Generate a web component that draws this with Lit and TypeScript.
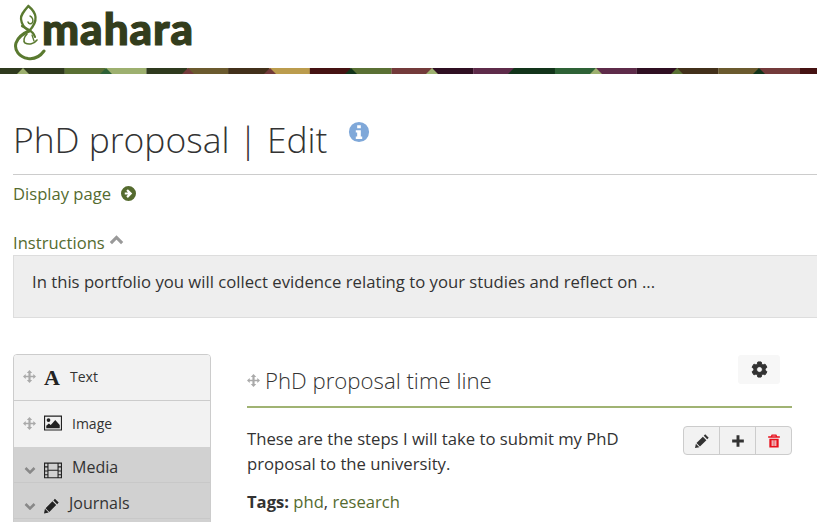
import { LitElement, html, css, svg } from 'lit';
import { customElement } from 'lit/decorators.js';

// banner pieces, left to right
const BANNER = [
  '#2f3a1e', '#2f3a1e', '#5a7034', '#9db06f', '#2f3a1e', '#6b5a2e', '#42301a', '#bb9c4d', '#451212',
  '#5a7034', '#733a3a', '#2f0f22', '#5e2b4a', '#12341a', '#2e6236', '#5e2b4a', '#2f0f22', '#42301a',
  '#6b5a2e', '#733a3a', '#451212',
];
// little triangles sitting on the bottom edge: [x, colour]
const TRIANGLES: [number, string][] = [
  [23, '#9db06f'], [106, '#2e6236'], [188, '#733a3a'], [270, '#733a3a'], [351, '#12341a'], [432, '#9db06f'],
  [514, '#12341a'], [596, '#9db06f'], [677, '#5a7034'], [759, '#12341a'],
];

const moveIcon = html`<svg class="move" viewBox="0 0 24 24"><path d="M12 0l5 5.500H14v5h5V7.500l5 4.500-5 4.500v-3h-5v5h3L12 24l-5-5.500h3v-5H5v3L0 12l5-4.500v3h5v-5H7z"/></svg>`;
const chevronDown = html`<svg class="chev" viewBox="0 0 24 16"><path d="M3 4l9 9 9-9" fill="none" stroke-width="5"/></svg>`;
const pencilPath = 'M17.500.5l6 6L21 9l-6-6zM13.500 4.500l6 6-11 11-6-6zM1.500 16.500l6 6L0 24z';

@customElement('app-root')
export class AppRoot extends LitElement {
  static styles = css`
    :host {
      display: block;
      height: 522px;
      overflow: hidden;
      background: #fff;
      color: #333;
      font-family: 'Open Sans', sans-serif;
      font-size: 16.6px;
    }

    .masthead {
      height: 68px;
      padding-left: 14px;
      display: flex;
      align-items: flex-start;
    }

    .mark {
      width: 36px;
      height: 58px;
      margin-top: 4px;
      flex: none;
    }

    .wordmark {
      font-family: Lato, sans-serif;
      font-weight: 900;
      font-size: 44px;
      letter-spacing: 1px;
      line-height: 56px;
      color: #333d1c;
      margin-left: -8px;
      -webkit-text-stroke: 1.2px #333d1c;
    }

    .banner {
      display: block;
      width: 817px;
      height: 6px;
    }

    main {
      padding-left: 13px;
    }

    .title {
      display: flex;
      align-items: flex-start;
      height: 101px;
      box-sizing: border-box;
      padding-top: 40px;
      border-bottom: 1px solid #ccc;
    }

    h1 {
      margin: 0;
      font-weight: 300;
      font-size: 35.4px;
      line-height: 50px;
    }

    .info {
      width: 22px;
      height: 22px;
      margin: 7px 0 0 21px;
      fill: #7fa8d9;
    }

    a {
      color: #556b2f;
      text-decoration: none;
    }

    .display {
      display: flex;
      align-items: center;
      gap: 10px;
      height: 36px;
    }

    .display svg {
      width: 15px;
      height: 15px;
      fill: #556b2f;
    }

    .instructions {
      display: flex;
      align-items: center;
      gap: 4px;
      margin-top: 18px;
      height: 26px;
      color: #556b2f;
    }

    .instructions svg {
      width: 15px;
      height: 10px;
      margin-top: -4px;
      stroke: #999;
    }

    .notice {
      height: 63px;
      box-sizing: border-box;
      padding: 0 0 10px 18px;
      display: flex;
      align-items: center;
      background: #eee;
      border: 1px solid #ddd;
      border-right: 0;
      font-size: 16.7px;
    }

    .columns {
      display: flex;
      margin-top: 36px;
    }

    .side {
      width: 198px;
      flex: none;
      box-sizing: border-box;
      border: 1px solid #ccc;
      border-radius: 4px 4px 0 0;
      overflow: hidden;
    }

    .tool {
      display: flex;
      align-items: center;
      height: 46px;
      box-sizing: border-box;
      padding: 0 0 2px 9px;
      background: #f2f2f2;
      border-bottom: 1px solid #ccc;
      font-size: 14px;
    }

    .tool + .tool {
      border-bottom: 0;
    }

    .move {
      width: 13px;
      height: 13px;
      fill: #aaa;
      flex: none;
    }

    .tool .ic {
      width: 18px;
      height: 18px;
      margin: 0 10px 0 8px;
      flex: none;
    }

    .letter {
      font-family: 'Liberation Serif', serif;
      font-weight: 700;
      font-size: 22px;
      line-height: 18px;
      width: 16px;
      margin: 2px 10px 0 8px;
      color: #222;
    }

    .group {
      display: flex;
      align-items: center;
      height: 36px;
      box-sizing: border-box;
      padding: 4px 0 0 10px;
      background: #d1d1d1;
      border-bottom: 1px solid #c8c8c8;
      font-size: 16px;
    }

    .group .chev {
      width: 12px;
      height: 8px;
      stroke: #888;
      flex: none;
      margin-top: 6px;
    }

    .group .ic {
      width: 18px;
      height: 18px;
      margin: 6px 10px 0 8px;
      flex: none;
    }

    .group .ic.narrow {
      width: 15px;
    }

    .block {
      width: 545px;
      margin-left: 36px;
      flex: none;
    }

    .block-head {
      position: relative;
      display: flex;
      align-items: center;
      gap: 5px;
      height: 54px;
      padding-top: 1px;
      box-sizing: border-box;
      border-bottom: 2px solid #a0b373;
    }

    .block-head h2 {
      margin: 0;
      font-weight: 300;
      font-size: 22.2px;
      line-height: 30px;
    }

    .gear {
      position: absolute;
      right: 12px;
      top: 1px;
      width: 42px;
      height: 29px;
      display: flex;
      align-items: center;
      justify-content: center;
      background: #f7f7f7;
      border-radius: 3px;
    }

    .gear svg {
      width: 19px;
      height: 19px;
      fill: #333;
      stroke: #333;
      stroke-width: 1.2;
    }

    .block-body {
      position: relative;
      padding-top: 18px;
    }

    .block-body p {
      margin: 0;
      width: 400px;
      line-height: 25px;
      font-size: 16.7px;
    }

    .tags {
      margin-top: 13px;
      line-height: 25px;
    }

    .tools {
      position: absolute;
      right: 0;
      top: 18px;
      display: flex;
      height: 29px;
      box-sizing: border-box;
      border: 1px solid #ccc;
      border-radius: 4px;
      background: #f2f2f2;
    }

    .tools span {
      width: 35px;
      display: flex;
      align-items: center;
      justify-content: center;
      border-left: 1px solid #ccc;
      fill: #333;
    }

    .tools span:first-child {
      border-left: 0;
    }

    .tools svg {
      width: 14px;
      height: 14px;
    }

    .tools .del {
      fill: #e8101c;
    }
  `;

  render() {
    return html`
      <header class="masthead">
        <svg class="mark" viewBox="14 4 36 58" fill="none" stroke="#5a7a30" stroke-linecap="round">
          <path stroke-width="2.300" d="M28.300 6C24 11 20.500 15 21 19c.5 5 3 9 8 12 4-4 7-9 6.500-14C35 12 32 9 28.300 6z"/>
          <path stroke-width="1.400" d="M30 16c2.500 1 3.500 4 2.500 6.500C31 24.500 28.500 24 28 22"/>
          <path stroke-width="3" d="M30 30.500C24 33 18 37 16 43c-2 7 3 14 12 15.500 7 1 12-2 16-7.500"/>
          <path stroke-width="2.200" d="M22 26c4 3 11 4 13 11"/>
          <path stroke-width="1.600" d="M27 34c-3 3-4 7-2 9 4 2 9 1 12-3"/>
          <path stroke-width="1.300" d="M32 35l2 6"/>
        </svg>
        <span class="wordmark">mahara</span>
      </header>
      <svg class="banner" viewBox="0 0 817 6">
        ${BANNER.map(
          (c, i) => svg`<rect x=${i * 40.85 - 17} y="0" width="41" height="6" fill=${c}></rect>`,
        )}
        ${TRIANGLES.map(
          ([x, c]) => svg`<polygon points="${x - 6},6 ${x},0 ${x + 6},6" fill=${c}></polygon>`,
        )}
      </svg>
      <main>
        <div class="title">
          <h1>PhD proposal | Edit</h1>
          <svg class="info" viewBox="0 0 24 24">
            <path fill-rule="evenodd" d="M12 1a11 11 0 1 0 0 22 11 11 0 0 0 0-22zM10 4.500h4v3.500h-4zM8.500 10h5.500v7h1.500v2.500h-7V17h1.500v-4.500H8.500z"/>
          </svg>
        </div>
        <a class="display" href="#">
          Display page
          <svg viewBox="0 0 24 24">
            <path fill-rule="evenodd" d="M12 0a12 12 0 1 0 0 24 12 12 0 0 0 0-24zM11 5l7 7-7 7-2.500-2.500 2.800-2.800H6v-3.400h5.300L8.500 7.500z"/>
          </svg>
        </a>
        <div class="instructions">
          Instructions
          <svg viewBox="0 0 24 16"><path d="M3 13l9-9 9 9" fill="none" stroke-width="5"/></svg>
        </div>
        <div class="notice">In this portfolio you will collect evidence relating to your studies and reflect on ...</div>
        <div class="columns">
          <div class="side">
            <div class="tool">${moveIcon}<span class="letter">A</span>Text</div>
            <div class="tool">
              ${moveIcon}
              <svg class="ic" viewBox="0 0 24 24">
                <path fill="#222" fill-rule="evenodd" d="M0 2h24v20H0zM1.500 3.500v17h21v-17zM6 5.500a2.500 2.500 0 1 1 0 5 2.500 2.500 0 0 1 0-5zM3 19v-3.500l3.500-3 2.500 2 6-6.500 6 6.500V19z"/>
              </svg>
              Image
            </div>
            <div class="group">
              ${chevronDown}
              <svg class="ic" viewBox="0 0 24 24">
                <path fill="#222" fill-rule="evenodd" d="M0 2h24v21H0zM1.500 3.500v3.500h3V3.500zM6 3.500v8h12v-8zM19.500 3.500v3.500h3V3.500zM1.500 8.500v4h3v-4zM19.500 8.500v4h3v-4zM6 13v8.500h12V13zM1.500 14v3.500h3V14zM19.500 14v3.500h3V14zM1.500 19v2.500h3V19zM19.500 19v2.500h3V19z"/>
              </svg>
              Media
            </div>
            <div class="group">
              ${chevronDown}
              <svg class="ic narrow" viewBox="0 0 24 24" fill="#222"><path d=${pencilPath}></path></svg>
              Journals
            </div>
            <div class="group"></div>
          </div>
          <section class="block">
            <div class="block-head">
              ${moveIcon}
              <h2>PhD proposal time line</h2>
              <div class="gear">
                <svg viewBox="0 0 24 24">
                  <path d="M19.140 12.940c.04-.3.06-.61.06-.94 0-.32-.02-.64-.07-.94l2.030-1.580c.18-.14.23-.41.12-.61l-1.920-3.320c-.12-.22-.37-.29-.59-.22l-2.390.96c-.5-.38-1.030-.7-1.620-.94l-.36-2.540c-.04-.24-.24-.41-.48-.41h-3.840c-.24 0-.43.17-.47.41l-.36 2.540c-.59.24-1.130.57-1.620.94l-2.390-.96c-.22-.08-.47 0-.59.22L2.740 8.870c-.12.21-.08.47.12.61l2.030 1.580c-.05.3-.09.63-.09.94s.02.64.07.94l-2.030 1.580c-.18.14-.23.41-.12.61l1.920 3.320c.12.22.37.29.59.22l2.390-.96c.5.38 1.030.7 1.620.94l.36 2.540c.05.24.24.41.48.41h3.840c.24 0 .44-.17.47-.41l.36-2.540c.59-.24 1.130-.56 1.620-.94l2.390.96c.22.08.47 0 .59-.22l1.920-3.320c.12-.22.07-.47-.12-.61l-2.010-1.580zM12 15.600c-1.980 0-3.600-1.620-3.600-3.600s1.620-3.600 3.600-3.600 3.600 1.620 3.600 3.600-1.620 3.600-3.600 3.600z"/>
                </svg>
              </div>
            </div>
            <div class="block-body">
              <p>These are the steps I will take to submit my PhD proposal to the university.</p>
              <div class="tags"><b>Tags:</b> <a href="#">phd</a>, <a href="#">research</a></div>
              <div class="tools">
                <span><svg viewBox="0 0 24 24"><path d=${pencilPath}></path></svg></span>
                <span><svg viewBox="0 0 24 24"><path d="M9.500 2h5v7.500H22v5h-7.500V22h-5v-7.500H2v-5h7.500z"/></svg></span>
                <span class="del">
                  <svg viewBox="0 0 24 24">
                    <path fill-rule="evenodd" d="M8 1h8l1.500 3H22v2.500H2V4h4.500zM9.500 2.800L9 4h6l-.5-1.200zM4 8h16v15H4zM8 10.500v10h1.800v-10zM11.100 10.500v10h1.800v-10zM14.200 10.500v10H16v-10z"/>
                  </svg>
                </span>
              </div>
            </div>
          </section>
        </div>
      </main>
    `;
  }
}
